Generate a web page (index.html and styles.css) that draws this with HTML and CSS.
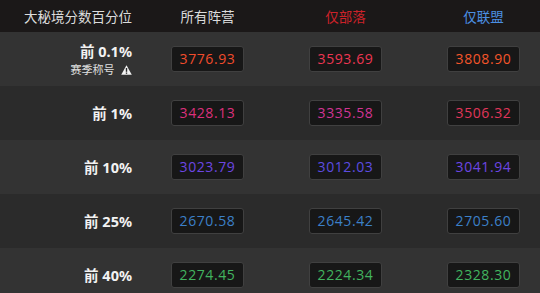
FILE: index.html
```html
<!DOCTYPE html>
<html lang="zh">
<head>
<meta charset="utf-8">
<link rel="stylesheet" href="styles.css">
</head>
<body>
<div class="table">
  <div class="row head">
    <div class="label">大秘境分数百分位</div>
    <div class="cell"><span class="hd">所有阵营</span></div>
    <div class="cell"><span class="hd horde">仅部落</span></div>
    <div class="cell"><span class="hd alliance">仅联盟</span></div>
  </div>
  <div class="row odd">
    <div class="label">
      <div class="pct">前 0.1%</div>
      <div class="sub">赛季称号 <svg class="warn" width="11" height="10" viewBox="0 0 11 10"><path d="M5.5 0.3 L10.8 9.7 L0.2 9.7 Z" fill="#f2f2f2"/><rect x="4.8" y="3" width="1.4" height="3.8" fill="#2a2a2a"/><rect x="4.8" y="7.5" width="1.4" height="1.3" fill="#2a2a2a"/></svg></div>
    </div>
    <div class="cell"><span class="val c-or">3776.93</span></div>
    <div class="cell"><span class="val c-rd">3593.69</span></div>
    <div class="cell"><span class="val c-or2">3808.90</span></div>
  </div>
  <div class="row even">
    <div class="label"><div class="pct">前 1%</div></div>
    <div class="cell"><span class="val c-pk">3428.13</span></div>
    <div class="cell"><span class="val c-pk2">3335.58</span></div>
    <div class="cell"><span class="val c-pk3">3506.32</span></div>
  </div>
  <div class="row odd">
    <div class="label"><div class="pct">前 10%</div></div>
    <div class="cell"><span class="val c-pu">3023.79</span></div>
    <div class="cell"><span class="val c-pu2">3012.03</span></div>
    <div class="cell"><span class="val c-pu">3041.94</span></div>
  </div>
  <div class="row even">
    <div class="label"><div class="pct">前 25%</div></div>
    <div class="cell"><span class="val c-bl">2670.58</span></div>
    <div class="cell"><span class="val c-bl">2645.42</span></div>
    <div class="cell"><span class="val c-bl">2705.60</span></div>
  </div>
  <div class="row odd">
    <div class="label"><div class="pct">前 40%</div></div>
    <div class="cell"><span class="val c-gr">2274.45</span></div>
    <div class="cell"><span class="val c-gr">2224.34</span></div>
    <div class="cell"><span class="val c-gr">2328.30</span></div>
  </div>
</div>
</body>
</html>
```

FILE: styles.css
```css
html, body {
  margin: 0;
  padding: 0;
  background: #2b2b2b;
  overflow: hidden;
}
body {
  width: 540px;
  height: 293px;
  font-family: "Noto Sans", "Noto Sans CJK SC", sans-serif;
  color: #e8e8e8;
}
.table {
  display: flex;
  flex-direction: column;
}
.row {
  display: grid;
  grid-template-columns: 139px 138px 138px 125px;
  align-items: center;
  height: 54px;
}
.row.head {
  height: 32px;
  background: #1b1818;
}
.row.odd { background: #333333; }
.row.even { background: #2b2b2b; }
.label {
  text-align: right;
  padding-right: 7px;
}
.head .label {
  font-size: 13.5px;
  color: #dcdcdc;
  font-family: "Noto Sans CJK SC", sans-serif;
}
.cell {
  padding-left: 32px;
  display: flex;
}
.hd {
  width: 73px;
  text-align: center;
  font-size: 13.5px;
  color: #dcdcdc;
  font-family: "Noto Sans CJK SC", sans-serif;
}
.hd.horde { color: #cc2229; }
.hd.alliance { color: #4b8fe2; }
.pct {
  font-weight: 700;
  font-size: 14.5px;
  line-height: 20px;
  color: #f2f2f2;
}
.sub {
  font-size: 11px;
  line-height: 16px;
  color: #e0e0e0;
  font-family: "Noto Sans CJK SC", sans-serif;
}
.warn {
  margin-left: 4px;
  vertical-align: -1px;
}
.val {
  box-sizing: border-box;
  width: 73px;
  height: 26px;
  line-height: 24px;
  text-align: center;
  background: #171717;
  border: 1px solid #404040;
  border-radius: 3px;
  font-family: "Open Sans", sans-serif;
  font-size: 14px;
  letter-spacing: 0.6px;
}
.c-or { color: #f04c2c; }
.c-rd { color: #ec3652; }
.c-or2 { color: #f4552a; }
.c-pk { color: #dc307c; }
.c-pk2 { color: #d03494; }
.c-pk3 { color: #e0365a; }
.c-pu { color: #6c46e2; }
.c-pu2 { color: #5c4ce0; }
.c-bl { color: #3c80c8; }
.c-gr { color: #42b45f; }
```
